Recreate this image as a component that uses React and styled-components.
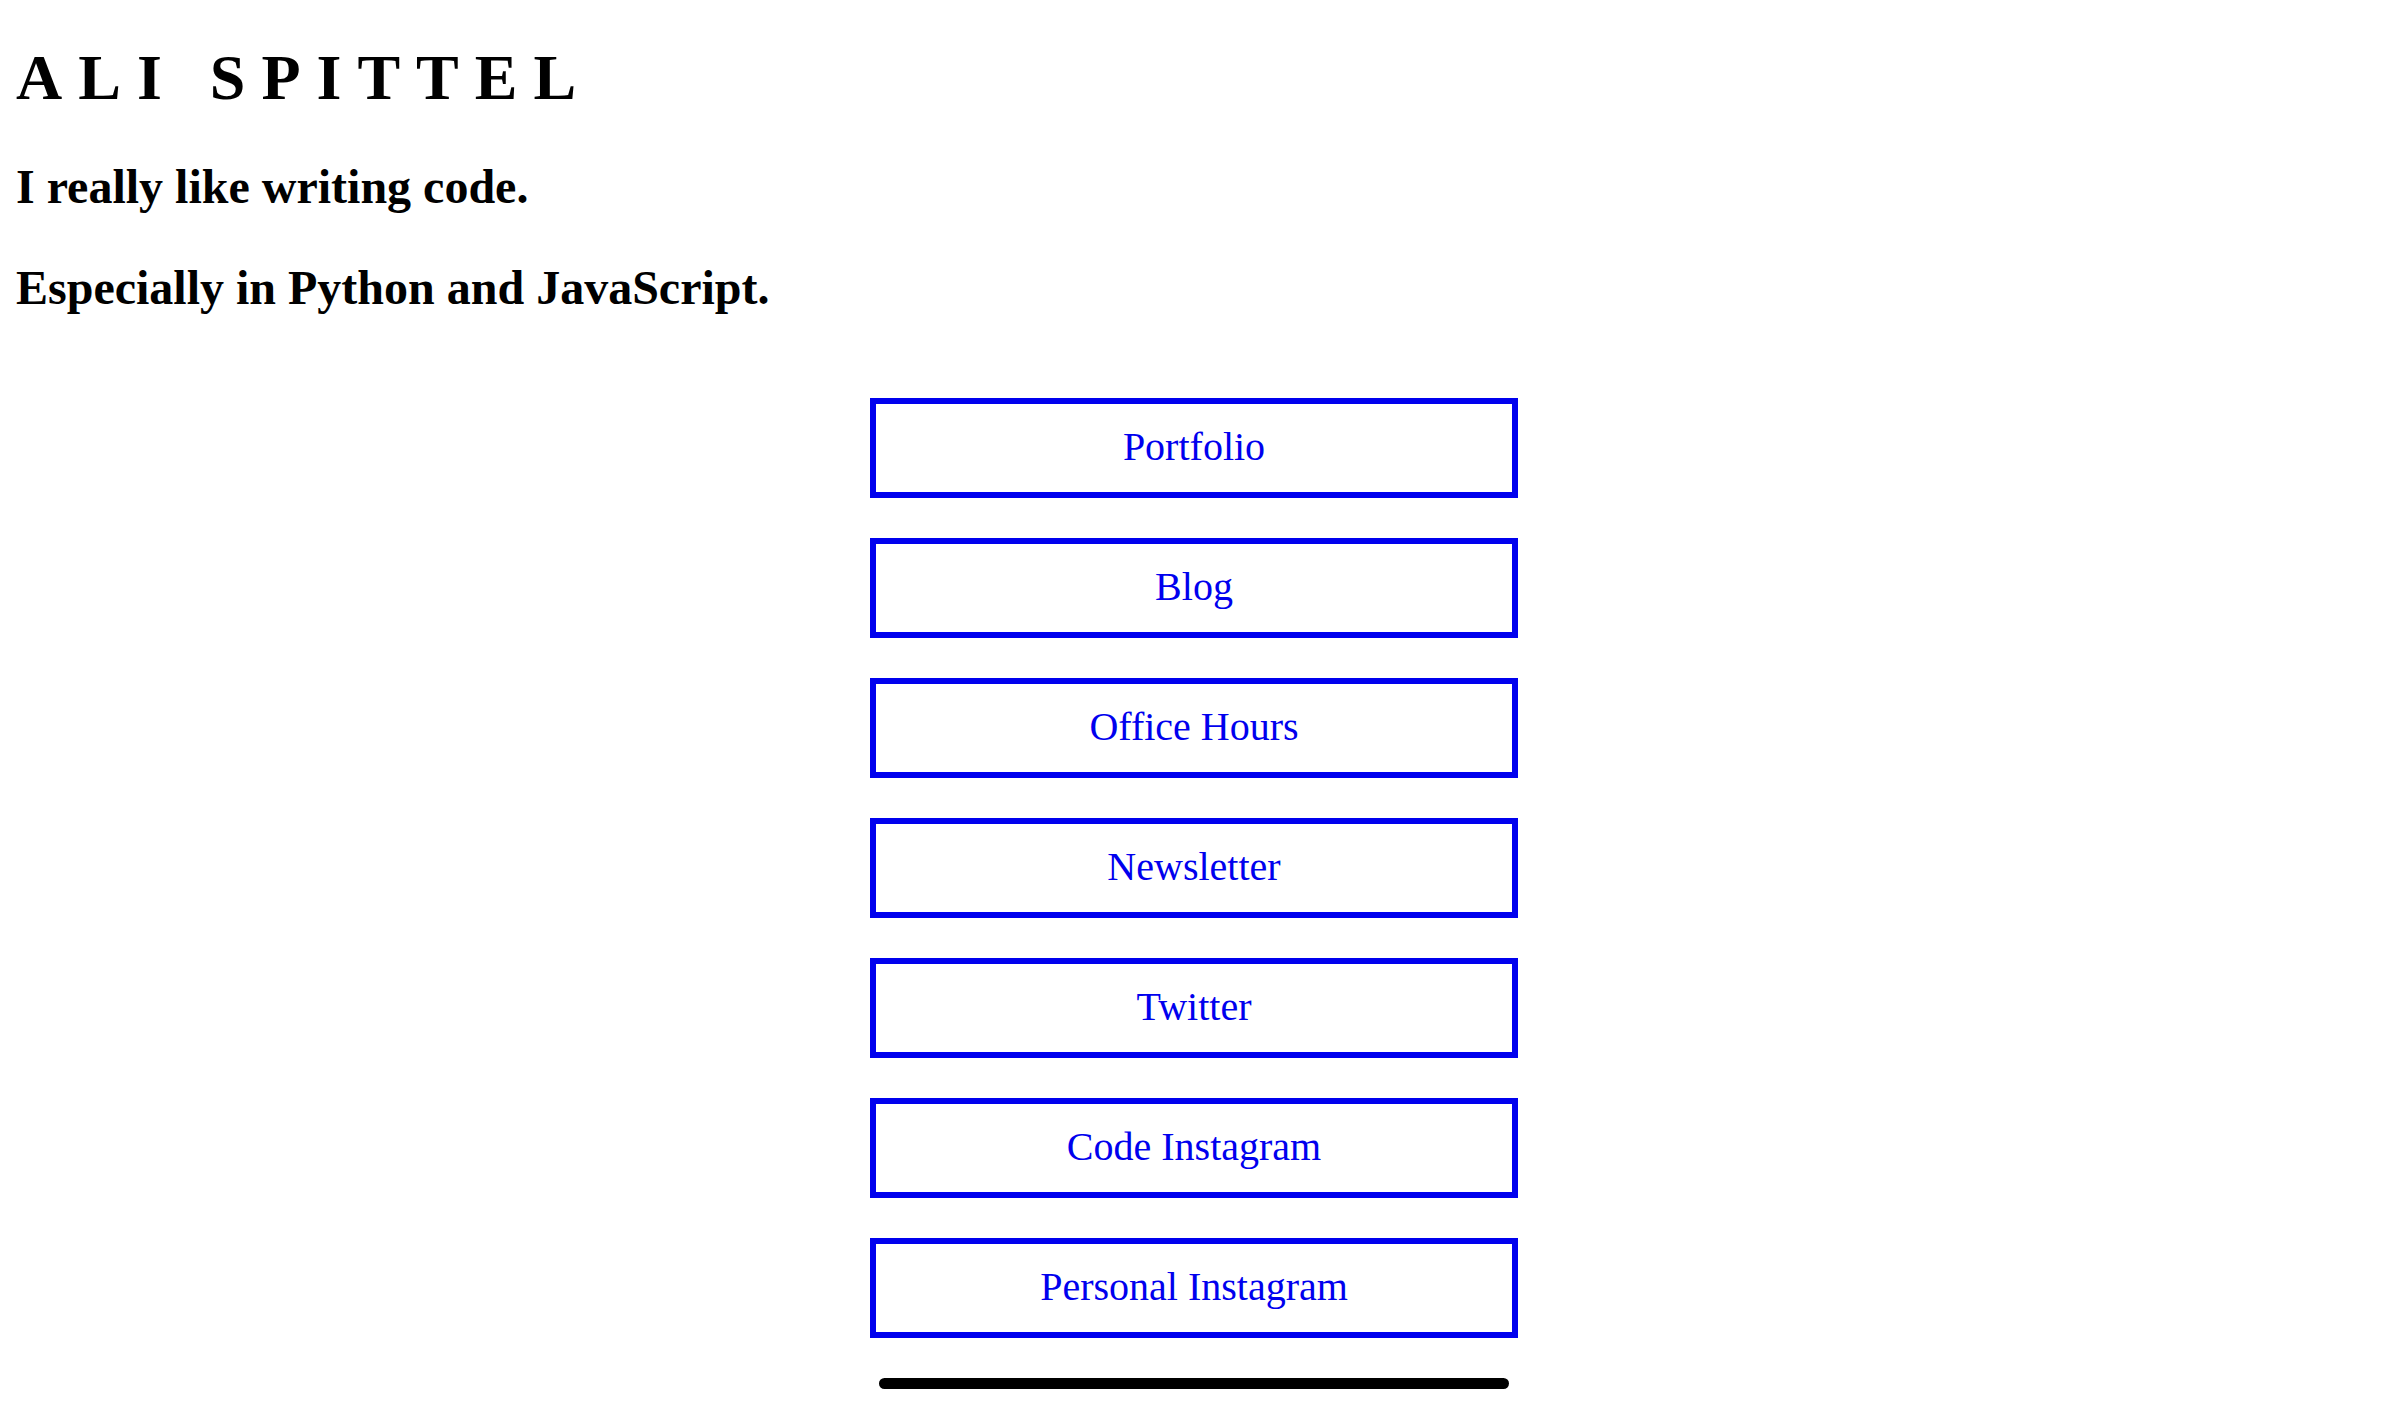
import styled, { createGlobalStyle } from "styled-components"

const GlobalStyle = createGlobalStyle`
body {
  margin: 0;
  background: #ffffff;
  color: #000000;
  font-family: "Liberation Serif", "Times New Roman", serif;
}
`;

const Page = styled.main`
min-height: 100vh;
padding: 42px 16px 80px;
box-sizing: border-box;
`;

const Title = styled.h1`
margin: 0;
font-size: 64px;
line-height: 72px;
font-weight: 700;
letter-spacing: 16px;
`;

const Tagline = styled.h2`
margin: 45px 0 0;
font-size: 48px;
line-height: 56px;
font-weight: 700;
`;

const LinkList = styled.nav`
display: flex;
flex-direction: column;
align-items: center;
gap: 40px;
margin-top: 82px;
`;

const LinkButton = styled.a`
display: flex;
align-items: center;
justify-content: center;
width: 648px;
height: 100px;
padding-bottom: 3px;
box-sizing: border-box;
border: 6px solid #0000ee;
color: #0000ee;
font-size: 40px;
text-decoration: none;
cursor: pointer;
`;

const HomeIndicator = styled.div`
position: fixed;
left: 50%;
bottom: 15px;
width: 630px;
height: 11px;
margin-left: -315px;
border-radius: 6px;
background: #000000;
`;

const links = [
    "Portfolio",
    "Blog",
    "Office Hours",
    "Newsletter",
    "Twitter",
    "Code Instagram",
    "Personal Instagram",
];

const App = () => {
    return (
        <>
            <GlobalStyle />
            <Page>
                <Title>ALI SPITTEL</Title>
                <Tagline>I really like writing code.</Tagline>
                <Tagline>Especially in Python and JavaScript.</Tagline>
                <LinkList>
                    {links.map((label) => (
                        <LinkButton key={label}>{label}</LinkButton>
                    ))}
                </LinkList>
            </Page>
            <HomeIndicator />
        </>
    )
}

export default App
